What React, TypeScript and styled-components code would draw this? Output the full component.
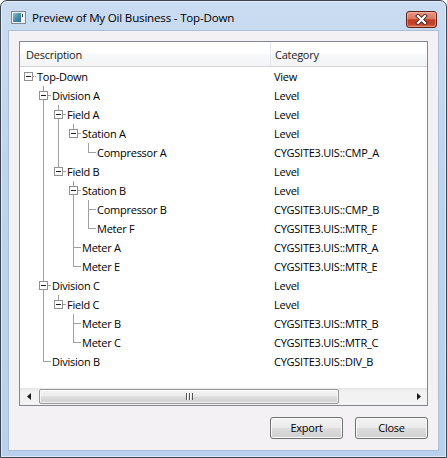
import React from "react";
import styled, { createGlobalStyle } from "styled-components";

type TreeNode = { name: string; category: string; children?: TreeNode[] };

type FlatRow = {
  name: string;
  category: string;
  depth: number;
  hasChildren: boolean;
  hasNext: boolean;
  guides: boolean[];
};

const tree: TreeNode = {
  name: "Top-Down",
  category: "View",
  children: [
    {
      name: "Division A",
      category: "Level",
      children: [
        {
          name: "Field A",
          category: "Level",
          children: [
            {
              name: "Station A",
              category: "Level",
              children: [{ name: "Compressor A", category: "CYGSITE3.UIS::CMP_A" }],
            },
          ],
        },
        {
          name: "Field B",
          category: "Level",
          children: [
            {
              name: "Station B",
              category: "Level",
              children: [
                { name: "Compressor B", category: "CYGSITE3.UIS::CMP_B" },
                { name: "Meter F", category: "CYGSITE3.UIS::MTR_F" },
              ],
            },
            { name: "Meter A", category: "CYGSITE3.UIS::MTR_A" },
            { name: "Meter E", category: "CYGSITE3.UIS::MTR_E" },
          ],
        },
      ],
    },
    {
      name: "Division C",
      category: "Level",
      children: [
        {
          name: "Field C",
          category: "Level",
          children: [
            { name: "Meter B", category: "CYGSITE3.UIS::MTR_B" },
            { name: "Meter C", category: "CYGSITE3.UIS::MTR_C" },
          ],
        },
      ],
    },
    { name: "Division B", category: "CYGSITE3.UIS::DIV_B" },
  ],
};

function flatten(node: TreeNode, depth: number, hasNext: boolean, guides: boolean[], out: FlatRow[]) {
  const kids = node.children ?? [];
  out.push({ name: node.name, category: node.category, depth, hasChildren: kids.length > 0, hasNext, guides });
  kids.forEach((child, i) => flatten(child, depth + 1, i < kids.length - 1, [...guides, hasNext], out));
  return out;
}

const rows = flatten(tree, 0, false, [], []);

const LINE = "#a0a0a0";
const FONT = `"Open Sans", "Noto Sans", sans-serif`;

const GlobalStyle = createGlobalStyle`
  html, body {
    margin: 0;
    padding: 0;
    background: #ffffff;
  }
  body {
    font-family: ${FONT};
    font-size: 11px;
    letter-spacing: -0.25px;
    color: #000;
  }
`;

const Window = styled.div`
  width: 447px;
  height: 458px;
  box-sizing: border-box;
  border: 1px solid #3c4450;
  border-radius: 7px 7px 0 0;
  background: linear-gradient(#cadcf1 0%, #bdd4ee 40%, #b9d1ec 100%);
  box-shadow: inset 0 0 0 1px rgba(255, 255, 255, 0.55);
  display: flex;
  flex-direction: column;
`;

const TitleBar = styled.div`
  height: 30px;
  flex: none;
  display: flex;
  align-items: flex-start;
  padding: 0 9px 0 10px;
`;

const TitleIcon = styled.svg`
  margin-top: 10px;
  flex: none;
`;

const TitleText = styled.div`
  margin: 8px 0 0 6px;
  font-size: 11.6px;
  letter-spacing: -0.2px;
  line-height: 17px;
  color: #000;
  flex: 1;
  white-space: nowrap;
`;

const CloseButton = styled.div`
  margin-top: 10px;
  width: 31px;
  height: 17px;
  box-sizing: border-box;
  border: 1px solid #5e2219;
  border-radius: 3px;
  background: linear-gradient(#e6947f 0%, #d97a63 45%, #c23c22 52%, #c4432a 80%, #dc6c4e 100%);
  box-shadow: inset 0 0 0 1px rgba(255, 220, 205, 0.4);
  display: flex;
  align-items: center;
  justify-content: center;
`;

const Content = styled.div`
  height: 419px;
  margin: 0 8px;
  box-sizing: border-box;
  padding: 10px;
  background: #f4f1f4;
  box-shadow: 0 0 0 1px #a9bed8;
  display: flex;
  flex-direction: column;
`;

const ListBox = styled.div`
  height: 365px;
  box-sizing: border-box;
  border: 1px solid #828790;
  background: #ffffff;
  display: flex;
  flex-direction: column;
`;

const Header = styled.div`
  height: 25px;
  flex: none;
  box-sizing: border-box;
  border-bottom: 1px solid #d5d5d5;
  background: linear-gradient(#ffffff 0%, #ffffff 50%, #f7f8f9 52%, #f3f4f6 100%);
  display: flex;
`;

const HeaderCell = styled.div<{ $width?: number }>`
  width: ${(p) => (p.$width ? `${p.$width}px` : "auto")};
  flex: ${(p) => (p.$width ? "none" : "1")};
  box-sizing: border-box;
  padding-left: ${(p) => (p.$width ? "6px" : "4px")};
  border-right: ${(p) => (p.$width ? "1px solid #e3e6ea" : "none")};
  display: flex;
  align-items: center;
  color: #1b1b1b;
`;

const Rows = styled.div`
  flex: 1;
  overflow: hidden;
`;

const Row = styled.div`
  height: 19px;
  display: flex;
`;

const DescCell = styled.div`
  width: 250px;
  flex: none;
  padding-left: 1px;
  box-sizing: border-box;
  display: flex;
`;

const Guide = styled.span<{ $line: boolean }>`
  width: 15px;
  flex: none;
  background: ${(p) => (p.$line ? `linear-gradient(${LINE}, ${LINE}) 7px 0 / 1px 100% no-repeat` : "none")};
`;

const Connector = styled.span<{ $stem: "none" | "half" | "full"; $root: boolean }>`
  width: 15px;
  flex: none;
  display: flex;
  align-items: center;
  background: ${(p) =>
      p.$root
        ? `repeating-linear-gradient(90deg, ${LINE} 0 1px, transparent 1px 2px) 8px 9px / 7px 1px no-repeat`
        : `linear-gradient(${LINE}, ${LINE}) 8px 9px / 7px 1px no-repeat`}
    ${(p) =>
      p.$stem === "none"
        ? ""
        : `, linear-gradient(${LINE}, ${LINE}) 7px 0 / 1px ${p.$stem === "half" ? "10px" : "100%"} no-repeat`};
`;

const ExpandBox = styled.span`
  width: 9px;
  height: 9px;
  margin: 0 0 1px 3px;
  box-sizing: border-box;
  border: 1px solid #919191;
  background: linear-gradient(#1e1e1e, #1e1e1e) center / 5px 1px no-repeat, #ffffff;
`;

const Label = styled.span`
  margin-left: 1px;
  line-height: 19px;
  white-space: nowrap;
`;

const CategoryCell = styled.div`
  flex: 1;
  padding-left: 4px;
  line-height: 19px;
  white-space: nowrap;
`;

const ScrollBar = styled.div`
  height: 17px;
  flex: none;
  display: flex;
  background: linear-gradient(#e6e6e6 0%, #f2f2f2 25%, #f3f3f3 100%);
`;

const ArrowButton = styled.div`
  width: 17px;
  flex: none;
  display: flex;
  align-items: center;
  justify-content: center;
`;

const Track = styled.div`
  flex: 1;
  padding: 1px 0 1px 2px;
  display: flex;
`;

const Thumb = styled.div`
  width: 300px;
  box-sizing: border-box;
  border: 1px solid #979797;
  border-radius: 2px;
  background: linear-gradient(#f4f4f4 0%, #ebebeb 45%, #dbdbdb 55%, #d0d0d0 100%);
  box-shadow: inset 0 0 0 1px rgba(255, 255, 255, 0.7);
  display: flex;
  align-items: center;
  justify-content: center;
`;

const Grip = styled.span`
  width: 7px;
  height: 7px;
  background: linear-gradient(90deg, #555 0 1px, #fff 1px 2px, transparent 2px 3px, #555 3px 4px, #fff 4px 5px, transparent 5px 6px, #555 6px 7px);
`;

const ButtonRow = styled.div`
  margin-top: 11px;
  display: flex;
  justify-content: flex-end;
  gap: 12px;
`;

const Button = styled.button`
  width: 73px;
  height: 22px;
  box-sizing: border-box;
  border: 1px solid #707070;
  border-radius: 3px;
  background: linear-gradient(#f2f2f2 0%, #ebebeb 48%, #dddddd 52%, #cfcfcf 100%);
  box-shadow: inset 0 0 0 1px #fbfbfb;
  font-family: ${FONT};
  font-size: 11px;
  letter-spacing: -0.25px;
  color: #000;
  padding: 0 0 1px;
`;

function WindowIcon() {
  return (
    <TitleIcon width="15" height="13" viewBox="0 0 15 13">
      <defs>
        <linearGradient id="pane" x1="0" y1="0" x2="1" y2="1">
          <stop offset="0" stopColor="#8fc1c8" />
          <stop offset="0.5" stopColor="#4a8fa8" />
          <stop offset="1" stopColor="#2f6d94" />
        </linearGradient>
      </defs>
      <rect x="0.5" y="0.5" width="14" height="12" fill="#eef1f3" stroke="#7f8a94" />
      <rect x="2" y="2" width="8" height="9" fill="url(#pane)" />
      <rect x="11" y="2" width="2" height="9" fill="#ffffff" />
      <rect x="11" y="3" width="1" height="3" fill="#2f3f4f" />
    </TitleIcon>
  );
}

function CloseGlyph() {
  return (
    <svg width="13" height="11" viewBox="0 0 13 11">
      <path d="M3 2 L10 9 M10 2 L3 9" stroke="#4a2a26" strokeWidth="4" strokeLinecap="square" />
      <path d="M3 2 L10 9 M10 2 L3 9" stroke="#ffffff" strokeWidth="2.2" strokeLinecap="square" />
    </svg>
  );
}

function Arrow({ dir }: { dir: "left" | "right" }) {
  return (
    <svg width="4" height="7" viewBox="0 0 4 7">
      <path d={dir === "left" ? "M4 0 L0 3.5 L4 7 Z" : "M0 0 L4 3.5 L0 7 Z"} fill="#1c1c1c" />
    </svg>
  );
}

function TreeRow({ row }: { row: FlatRow }) {
  const stem = row.depth === 0 ? "none" : row.hasNext ? "full" : "half";
  return (
    <Row>
      <DescCell>
        {row.guides.map((line, i) => (
          <Guide key={i} $line={line} />
        ))}
        <Connector $stem={stem} $root={row.depth === 0}>
          {row.hasChildren && <ExpandBox />}
        </Connector>
        <Label>{row.name}</Label>
      </DescCell>
      <CategoryCell>{row.category}</CategoryCell>
    </Row>
  );
}

export default function App() {
  return (
    <>
      <GlobalStyle />
      <Window>
        <TitleBar>
          <WindowIcon />
          <TitleText>Preview of My Oil Business - Top-Down</TitleText>
          <CloseButton>
            <CloseGlyph />
          </CloseButton>
        </TitleBar>
        <Content>
          <ListBox>
            <Header>
              <HeaderCell $width={251}>Description</HeaderCell>
              <HeaderCell>Category</HeaderCell>
            </Header>
            <Rows>
              {rows.map((row) => (
                <TreeRow key={row.name} row={row} />
              ))}
            </Rows>
            <ScrollBar>
              <ArrowButton>
                <Arrow dir="left" />
              </ArrowButton>
              <Track>
                <Thumb>
                  <Grip />
                </Thumb>
              </Track>
              <ArrowButton>
                <Arrow dir="right" />
              </ArrowButton>
            </ScrollBar>
          </ListBox>
          <ButtonRow>
            <Button>Export</Button>
            <Button>Close</Button>
          </ButtonRow>
        </Content>
      </Window>
    </>
  );
}
